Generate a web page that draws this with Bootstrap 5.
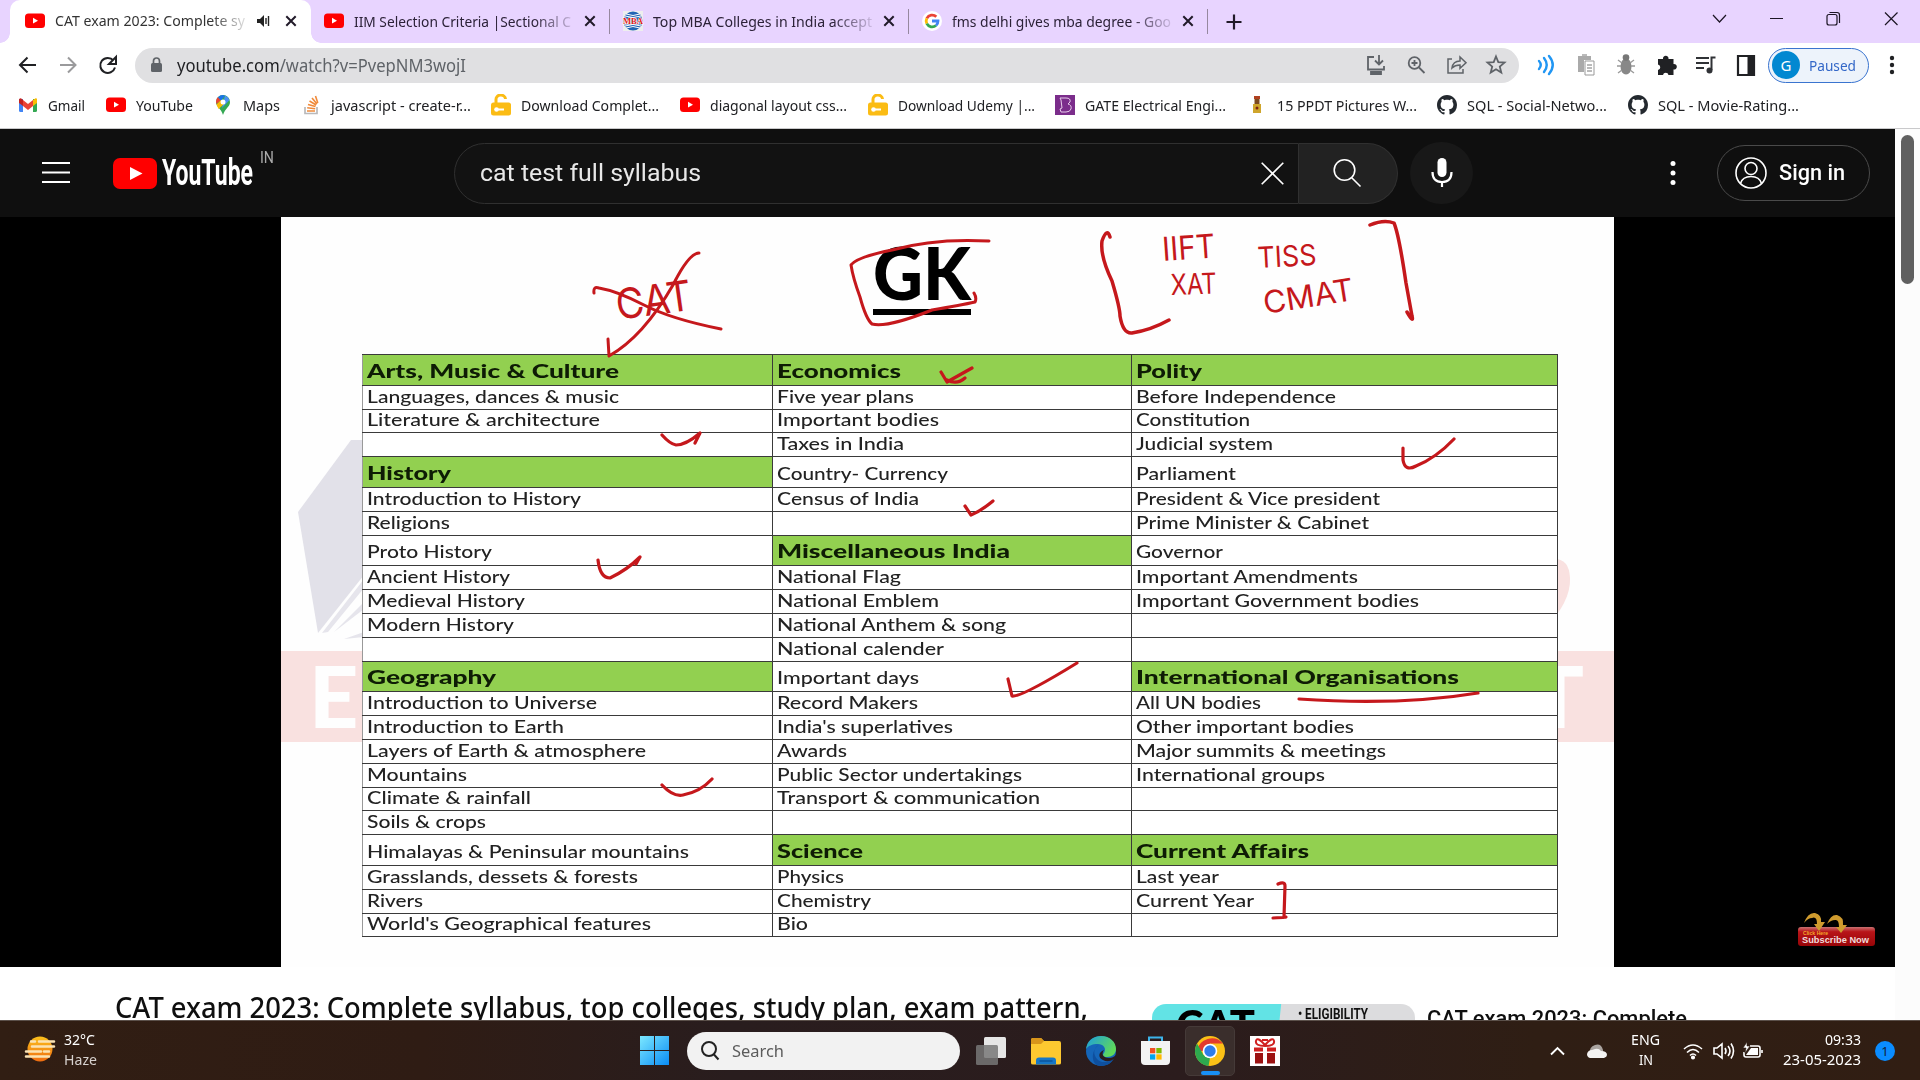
<!DOCTYPE html>
<html lang="en">
<head>
<meta charset="utf-8">
<title>CAT exam 2023: Complete syllabus</title>
<link href="https://cdn.jsdelivr.net/npm/bootstrap@5.3.0/dist/css/bootstrap.min.css" rel="stylesheet">
<style>
html,body{width:1920px;height:1080px;overflow:hidden}
body{font-family:"Noto Sans","Open Sans",sans-serif;color:#202124;background:#fff}
svg{display:block;flex:none;overflow:visible}
.fit{display:inline-block;white-space:nowrap;transform-origin:0 50%;flex:none}
.tabstrip{height:43px;background:#e8d4ff;font-size:15.3px;padding-left:10px}
.tab-item{width:299px;height:42px;padding-left:13px;padding-bottom:1px;color:#2c2238}
.tab-item.first{width:301px;height:43px;background:#fff;border-radius:10px 10px 0 0;padding-left:15px;padding-bottom:2px;color:#333;position:relative}
.tab-item.first::before,.tab-item.first::after{content:"";position:absolute;bottom:0;width:10px;height:10px}
.tab-item.first::before{left:-10px;background:radial-gradient(circle at 0 0,#e8d4ff 9.5px,#fff 10px)}
.tab-item.first::after{right:-10px;background:radial-gradient(circle at 100% 0,#e8d4ff 9.5px,#fff 10px)}
.tab-title{width:219px;margin-left:10px;overflow:hidden;-webkit-mask-image:linear-gradient(90deg,#000 82%,rgba(0,0,0,.15) 100%);mask-image:linear-gradient(90deg,#000 82%,rgba(0,0,0,.15) 100%)}
.tab-item.first .tab-title{width:190px;margin-right:8px}
.tab-item.first .tab-x{margin-left:14px}
.tab-x{margin-left:11px}
.tab-sep{width:1px;height:25px;background:#96889f}
.toolbar-row{height:43px;padding-left:15px;padding-top:1px}
.omnibox{width:1384px;height:35px;border-radius:18px;background:#e0e0e2;font-size:17.5px;color:#5f6368;padding:0 10px 0 15px}
.omnibox b{font-weight:400;color:#202124}
.profile-chip{width:101px;height:35px;border:1.5px solid #3a74cf;border-radius:18px;background:#edf3fb;color:#3367c8;font-size:15px;padding-left:3px}
.avatar-dot{width:28px;height:28px;border-radius:50%;background:#0288d1;color:#fff;font-size:15px}
.bookmarks{height:43px;padding-left:18px;padding-bottom:4px;font-size:15.3px;gap:20.6px;border-bottom:1px solid #c9c9cb}
.bookmarks>div{gap:10px}
.viewport-area{height:891px;overflow:hidden}
.page-col{width:1895px}
.masthead{height:88px;background:#0f0f0f;color:#fff;font-family:Roboto,sans-serif}
.searchfield{width:845px;height:61px;border:1px solid #303030;border-radius:31px 0 0 31px;background:#121212;font-size:24px;color:#e8e8e8;padding:0 14px 0 25px}
.searchbtn{width:99px;height:61px;border:1px solid #303030;border-left:0;border-radius:0 31px 31px 0;background:#222;padding-right:2px}
.micbtn{width:63px;height:62px;border-radius:50%;background:#181818}
.signin{width:153px;height:56px;border:1px solid #4a4a4a;border-radius:28px;padding-left:17px;font-size:22.5px;font-weight:500}
.wordmark{font-weight:700;font-size:37px;line-height:40px}
.video-box{height:750px;background:#000;padding-left:281px}
.slide-area{width:1333px;height:750px;background:#fefefe;position:relative;overflow:hidden;padding:16px 56px 0 81px;font-family:Lato,sans-serif}
.overlay-svg{position:absolute;left:0;top:0}
.gk-title{height:121px;color:#000;font-weight:900;font-size:73px;line-height:78px;padding-left:511px}
.gk-bar{width:98px;height:6px;background:#000;margin-top:-2px}
.syllabus{width:1196px;table-layout:fixed;border-collapse:collapse;position:relative;background:#fff;color:#222;font-size:17px;line-height:18px;font-weight:500}
.syllabus td{border:1.6px solid #3a3a3a;padding:0 0 3px 4px;height:23.8px;vertical-align:bottom;white-space:nowrap;overflow:hidden}
.syllabus td:first-child{border-left-color:#999}
.syllabus tr.tall td{height:30.8px;padding-bottom:4px}
.syllabus td.head{background:#92d050;color:#0e1c05;font-weight:900;font-size:19px;line-height:22px;padding-bottom:3px!important}
.sub-badge{position:absolute;left:1794px;top:910px;z-index:3}
.below{padding:32px 0 0 115px;height:53px;overflow:hidden}
.watch-title{font-size:28.5px;line-height:36px;font-weight:500;color:#0f0f0f;width:1037px;margin-top:-10px}
.thumb{width:263px;height:60px;border-radius:14px 14px 0 0;background:linear-gradient(96deg,#62e3e5 0 128px,#dcdcde 129px);margin-top:5px;overflow:hidden}
.thumb-cat{font:900 41px/41px Lato,sans-serif;color:#000;padding-left:24px;width:146px}
.thumb-el{font:700 14px/20px Roboto,sans-serif;color:#111}
.side-title{font:500 22.5px/30px Roboto,sans-serif;color:#0f0f0f;margin:4px 0 0 12px}
.scroll-track{width:25px;background:#fcfcfc;padding:6px 0 0 6px}
.scroll-thumb{width:13px;height:149px;border-radius:7px;background:#606060}
.taskbar{height:60px;border-top:1px solid #5b504a;background:linear-gradient(90deg,#311e13,#2f1c14 22%,#291d1e 38%,#2b1c1d 62%,#2f1e14 80%,#311e13);color:#fff;font-size:14.5px;line-height:20px}
.weather{width:640px;padding-left:25px;gap:9px}
.task-search{width:273px;height:38px;border-radius:19px;background:#f2f2f2;margin:0 16px 0 18px;color:#5c5c5c;font-size:17px;padding-left:14px;gap:13px}
.task-icons{gap:25px}
.chrome-slot{width:50px;height:50px;margin:0 -10px;border-radius:5px;background:#3a2e2c;border:1px solid #453a38;position:relative}
.chrome-slot i{position:absolute;left:15px;bottom:0;width:19px;height:4px;border-radius:2px;background:#1890f5}
.tray{margin-left:auto;padding-right:25px}
.two-line{padding-bottom:3px}
.note-badge{width:20px;height:20px;border-radius:50%;background:#0a8cff;color:#10213a;font-size:13px;margin-left:14px}
</style>
<script src="https://cdn.jsdelivr.net/npm/bootstrap@5.3.0/dist/js/bootstrap.bundle.min.js"></script>
</head>
<body>
<svg width="0" height="0" class="position-absolute">
<defs>
<symbol id="yt" viewBox="0 0 20 18"><rect y="1.5" width="20" height="14.5" rx="3.5" fill="#f00"/><path d="M8 5.8v5.8l5-2.9z" fill="#fff"/></symbol>
<symbol id="cross" viewBox="0 0 12 12"><path d="M1.3 1.3l9.4 9.4M10.7 1.3L1.3 10.7" stroke="#211a29" stroke-width="2"/></symbol>
<symbol id="lockopen" viewBox="0 0 20 22"><path d="M5 10V5.500a4.500 4 0 0 1 9.500-.5" fill="none" stroke="#fbbc14" stroke-width="3"/><rect y="8.500" width="20" height="13" rx="2.500" fill="#fbbc14"/><circle cx="5.500" cy="15.500" r="2.300" fill="#fff"/><path d="M6 15.500h7" stroke="#fff" stroke-width="2"/></symbol>
<symbol id="gh" viewBox="0 0 16 16"><path fill="#24292f" d="M8 0C3.580 0 0 3.580 0 8c0 3.540 2.290 6.530 5.470 7.590.4.070.55-.17.55-.38 0-.19-.01-.82-.01-1.490-2.010.37-2.530-.49-2.690-.94-.09-.23-.48-.94-.82-1.130-.28-.15-.68-.52-.01-.53.63-.01 1.080.58 1.230.82.72 1.210 1.870.87 2.330.66.07-.52.28-.87.51-1.070-1.780-.2-3.640-.89-3.640-3.950 0-.87.31-1.590.82-2.150-.08-.2-.36-1.020.08-2.120 0 0 .67-.21 2.200.82.64-.18 1.320-.27 2-.27s1.360.09 2 .27c1.530-1.040 2.200-.82 2.200-.82.44 1.100.16 1.920.08 2.120.51.56.82 1.270.82 2.150 0 3.070-1.870 3.750-3.650 3.950.29.25.54.73.54 1.480 0 1.070-.01 1.930-.01 2.200 0 .21.15.46.55.38A8.010 8.010 0 0 0 16 8c0-4.420-3.580-8-8-8z"/></symbol>
</defs>
</svg>

<!-- Tab strip -->
<div class="tabstrip d-flex align-items-center">
  <div class="tab-item first d-flex align-items-center">
    <svg width="20" height="18"><use href="#yt"/></svg>
    <div class="tab-title"><span class="fit" data-w="190">CAT exam 2023: Complete sy</span></div>
    <svg width="14" height="12" viewBox="0 0 14 12" class="ms-1"><path d="M0 4h3l4-4v12L3 8H0z" fill="#222"/><path d="M9 3v6M11.500 1v10" stroke="#222" stroke-width="1.400"/></svg>
    <svg width="12" height="12" class="tab-x"><use href="#cross"/></svg>
  </div>
  <div class="tab-item d-flex align-items-center">
    <svg width="20" height="18"><use href="#yt"/></svg>
    <div class="tab-title"><span class="fit" data-w="217">IIM Selection Criteria |Sectional C</span></div>
    <svg width="12" height="12" class="tab-x"><use href="#cross"/></svg>
    <div class="tab-sep ms-auto"></div>
  </div>
  <div class="tab-item d-flex align-items-center">
    <svg width="20" height="20" viewBox="0 0 20 20"><path fill="#eee" d="M0 0h20v20H0z"/><circle cx="10" cy="10" r="9.500" fill="#2265b5"/><path d="M2 5q8 3 16 0M3 3q7 3 14 0M2 15q8-3 16 0M3 17q7-3 14 0" stroke="#fff" fill="none"/><text x="0" y="13" font-size="8.500" font-family="Liberation Serif,serif" font-weight="700" fill="#e01818" stroke="#fff" stroke-width="1.200" paint-order="stroke" textLength="20" lengthAdjust="spacingAndGlyphs">MBA</text></svg>
    <div class="tab-title"><span class="fit" data-w="219">Top MBA Colleges in India accept</span></div>
    <svg width="12" height="12" class="tab-x"><use href="#cross"/></svg>
    <div class="tab-sep ms-auto"></div>
  </div>
  <div class="tab-item d-flex align-items-center">
    <svg width="20" height="20" viewBox="0 0 20 20"><circle cx="10" cy="10" r="10" fill="#fff"/><g fill="none" stroke-width="2.800"><path d="M4.800 7.300A6 6 0 0 1 14.300 5.800" stroke="#ea4335"/><path d="M4.800 12.700a6 6 0 0 1 0-5.400" stroke="#fbbc05"/><path d="M14 14.500a6 6 0 0 1-9.200-1.800" stroke="#34a853"/><path d="M10 10h6a6 6 0 0 1-2 4.500" stroke="#4285f4"/></g></svg>
    <div class="tab-title"><span class="fit" data-w="219">fms delhi gives mba degree - Goo</span></div>
    <svg width="12" height="12" class="tab-x"><use href="#cross"/></svg>
    <div class="tab-sep ms-auto"></div>
  </div>
  <svg width="16" height="16" viewBox="0 0 16 16" style="margin-left:18px"><path d="M8 0.500v15M.5 8h15" stroke="#211a29" stroke-width="2.200"/></svg>
  <svg class="ms-auto mb-2" width="190" height="20" viewBox="1711 8 190 20" style="margin-right:19px" fill="none" stroke="#1c1524" stroke-width="1.200"><path d="M1713 15l6.500 7 6.500-7M1770 18.500h13M1885 12.500l12.500 12.500M1897.500 12.500L1885 25"/><rect x="1827" y="14.500" width="10" height="10.500" rx="2"/><path d="M1829.500 12.500h7.500q2.500 0 2.500 2.500v8"/></svg>
</div>

<!-- Toolbar -->
<div class="toolbar-row d-flex align-items-center">
  <svg width="120" height="24" viewBox="15 0 120 24" fill="none" stroke="#202124" stroke-width="2"><path d="M36 12H20M27.500 4.500L20 12l7.500 7.500"/><path d="M60 12h16M68 4.500l7.500 7.500-7.500 7.500" stroke="#9a9a9c"/><path d="M113.500 7.500a7.500 7.500 0 1 0 1.500 7M116 4v7h-7z"/></svg>
  <div class="omnibox d-flex align-items-center">
    <svg width="14" height="16" viewBox="0 0 14 16"><rect x="1" y="6" width="11" height="9" rx="1.500" fill="#5f6368"/><path d="M3.500 7V4a3 3 0 0 1 6 0v3" stroke="#5f6368" stroke-width="1.700" fill="none"/></svg>
    <span class="fit" style="margin-left:13px" data-w="289"><b>youtube.com</b>/watch?v=PvepNM3wojI</span>
    <svg class="ms-auto" width="146" height="24" viewBox="1363 0 146 24" fill="none" stroke="#5f6368" stroke-width="1.800"><path d="M1374 4h-6v12.500h16V13M1379 2v9M1375 7.500l4 4 4-4M1371 19h10v2h-10z"/><circle cx="1414.500" cy="10" r="5.800"/><path d="M1419 14.500l5.500 5.500M1411.500 10h6M1414.500 7v6"/><path d="M1452 6h-4v14h15v-4M1452 15q1-7 8-7V4l6 5.800-6 5.500V12q-5 0-8 3z" stroke-width="1.500"/><path d="M1496 3.500l2.300 5.700 6.200.4-4.700 4 1.500 6-5.300-3.300-5.300 3.300 1.500-6-4.700-4 6.200-.4z"/></svg>
  </div>
  <svg width="249" height="26" viewBox="1519 0 249 26"><g fill="none" stroke="#2196f3" stroke-width="2.400" stroke-linecap="round"><path d="M1539 9q3.500 4 0 8M1544 6q5.500 7 0 14M1549 4q7.500 9 0 18"/></g><g fill="#aaa"><path d="M1578 4h13v4h-7v12h-6z"/><path d="M1585 9h9l0 14h-9z" fill="#fff" stroke="#999"/><path d="M1587 13h5M1587 16h5M1587 19h5M1582 3h5" stroke="#777"/></g><g><ellipse cx="1626" cy="14.500" rx="5.500" ry="8" fill="#888"/><circle cx="1626" cy="5.500" r="3.300" fill="#777"/><path d="M1618 8l4 3M1617 14h4M1618 21l4-3M1634 8l-4 3M1635 14h-4M1634 21l-4-3" stroke="#999" stroke-width="1.300"/></g><path d="M1658 7h5a2.800 2.800 0 1 1 5.500 0h5v5a2.800 2.800 0 1 1 0 5.500V23h-5a2.800 2.800 0 0 0-5.500 0h-5v-5a2.800 2.800 0 0 0 0-5.500z" fill="#202124"/><path d="M1696 6h13M1696 11h13M1696 16h8" stroke="#303236" stroke-width="2"/><path d="M1711.500 18V5.500h4" stroke="#303236" stroke-width="2" fill="none"/><circle cx="1709.500" cy="18.500" r="3" fill="#303236"/><path d="M1738 4h16v19h-16z" fill="#fff" stroke="#202124" stroke-width="2.200"/><path d="M1747.500 4h7v19h-7z" fill="#202124"/></svg>
  <div class="profile-chip d-flex align-items-center"><div class="avatar-dot d-flex align-items-center justify-content-center">G</div><span class="fit" style="margin-left:9px" data-w="47">Paused</span></div>
  <svg width="6" height="22" viewBox="0 0 6 22" style="margin-left:20px" fill="#202124"><circle cx="3" cy="4" r="2.200"/><circle cx="3" cy="11" r="2.200"/><circle cx="3" cy="18" r="2.200"/></svg>
</div>

<!-- Bookmarks -->
<div class="bookmarks d-flex align-items-center">
  <div class="d-flex align-items-center"><svg width="20" height="16" viewBox="0 0 20 16"><path d="M1 2h4v13H2.500Q1 15 1 13.500z" fill="#4285f4"/><path d="M15 2h4v11.500q0 1.500-1.500 1.500H15z" fill="#34a853"/><path d="M15 3l3-2 1 1v4l-4 3z" fill="#fbbc04"/><path d="M5 3l5 4 5-4v6l-5 4-5-4z" fill="#ea4335"/><path d="M1 2.500Q2.500 0 5 3v6L1 6z" fill="#c5221f"/></svg><span class="fit" data-w="37">Gmail</span></div>
  <div class="d-flex align-items-center"><svg width="20" height="18"><use href="#yt"/></svg><span class="fit" data-w="57">YouTube</span></div>
  <div class="d-flex align-items-center"><svg width="20" height="22" viewBox="0 0 20 20"><path d="M10 0a7 7 0 0 1 7 7c0 5-5 6-7 13C8 13 3 12 3 7a7 7 0 0 1 7-7z" fill="#34a853"/><path d="M3.500 9A7 7 0 0 1 5 2l3.500 3z" fill="#ea4335"/><path d="M5 2.200A7 7 0 0 1 12 .4L8 6z" fill="#1a73e8"/><path d="M12 .4A7 7 0 0 1 16.500 5L9 13z" fill="#4a90f5"/><path d="M3.500 9.500L8 5l3 4-5.500 5z" fill="#fbbc04"/><circle cx="10" cy="7" r="2.500" fill="#fff"/></svg><span class="fit" data-w="37">Maps</span></div>
  <div class="d-flex align-items-center"><svg width="20" height="20" viewBox="0 0 20 20" fill="none"><path d="M4 12v6.500h12V12" stroke="#b9b9bb" stroke-width="1.700"/><path d="M6 16h8M6.200 12.800l8 .9M7 9.500l7.500 2M8.500 6l6.700 4M11 3l5 6M14.500 1l2.300 7" stroke="#f08a3a" stroke-width="1.600"/></svg><span class="fit" data-w="140">javascript - create-r...</span></div>
  <div class="d-flex align-items-center"><svg width="20" height="22"><use href="#lockopen"/></svg><span class="fit" data-w="138">Download Complet...</span></div>
  <div class="d-flex align-items-center"><svg width="20" height="18"><use href="#yt"/></svg><span class="fit" data-w="137">diagonal layout css...</span></div>
  <div class="d-flex align-items-center"><svg width="20" height="22"><use href="#lockopen"/></svg><span class="fit" data-w="137">Download Udemy |...</span></div>
  <div class="d-flex align-items-center"><svg width="20" height="20" viewBox="0 0 20 20"><path d="M0 0h20v20H0z" fill="#7b2d8b"/><path d="M5 3h6q5 0 4 4l-2 2q4 1 3 5-1 3-5 3H6l-1-3 2-1-1-8z" fill="none" stroke="#e7cdea"/></svg><span class="fit" data-w="141">GATE Electrical Engi...</span></div>
  <div class="d-flex align-items-center"><svg width="20" height="18" viewBox="0 0 20 18"><path d="M7 0h6v3H7z" fill="#b0401f"/><path d="M7.500 3h5v5h-5z" fill="#7c4a20"/><path d="M6 8h8v9H6z" fill="#cfa52c"/><circle cx="10" cy="12" r="1.500" fill="#7c2412"/></svg><span class="fit" data-w="140">15 PPDT Pictures W...</span></div>
  <div class="d-flex align-items-center"><svg width="20" height="20"><use href="#gh"/></svg><span class="fit" data-w="140">SQL - Social-Netwo...</span></div>
  <div class="d-flex align-items-center"><svg width="20" height="20"><use href="#gh"/></svg><span class="fit" data-w="141">SQL - Movie-Rating...</span></div>
</div>

<!-- Web page -->
<div class="viewport-area d-flex">
  <div class="page-col">
    <header class="masthead d-flex align-items-center">
      <svg width="28" height="22" viewBox="0 0 28 22" style="margin-left:42px"><path d="M0 1h28M0 10.500h28M0 20h28" stroke="#fff" stroke-width="2"/></svg>
      <svg width="44" height="31" viewBox="0 0 44 31" style="margin-left:43px"><rect width="44" height="31" rx="7" fill="#f00"/><path d="M17 9v13l12.500-6.500z" fill="#fff"/></svg>
      <span class="fit wordmark" style="margin-left:5px" data-w="91">YouTube</span>
      <span class="fit align-self-start" style="margin:17px 0 0 7px;font-size:16px;color:#aaa" data-w="14">IN</span>
      <div class="searchfield d-flex align-items-center justify-content-between" style="margin-left:180px"><span class="fit" data-w="221">cat test full syllabus</span><svg width="23" height="23" viewBox="0 0 23 23"><path d="M.7.7l21.600 21.600M22.300.7L.7 22.300" stroke="#fff" stroke-width="1.600"/></svg></div>
      <div class="searchbtn d-flex align-items-center justify-content-center"><svg width="28" height="28" viewBox="0 0 28 28" fill="none" stroke="#fff" stroke-width="1.600"><circle cx="11.500" cy="11" r="10.300"/><path d="M18.500 18.500l9 9"/></svg></div>
      <div class="micbtn d-flex align-items-center justify-content-center" style="margin-left:12px"><svg width="22" height="30" viewBox="0 0 22 30"><rect x="6.500" y="0" width="9" height="19" rx="4.500" fill="#fff"/><path d="M1.500 14q0 10 9.500 10t9.500-10M11 24v5" fill="none" stroke="#fff" stroke-width="2.200"/></svg></div>
      <svg width="6" height="24" viewBox="0 0 6 24" fill="#fff" style="margin-left:197px"><circle cx="3" cy="2.500" r="2.500"/><circle cx="3" cy="12" r="2.500"/><circle cx="3" cy="21.500" r="2.500"/></svg>
      <div class="signin d-flex align-items-center" style="margin-left:41px"><svg width="32" height="32" viewBox="0 0 32 32" fill="none" stroke="#fff" stroke-width="1.600"><circle cx="16" cy="16" r="15"/><circle cx="16" cy="11.500" r="6"/><path d="M5.500 26.500q2-7 10.500-7t10.500 7"/></svg><span class="fit" style="margin-left:12px" data-w="66">Sign in</span></div>
    </header>

    <div class="video-box">
      <div class="slide-area">
        <!-- watermark -->
        <svg class="overlay-svg" width="1333" height="750" viewBox="281 217 1333 750">
          <path d="M351 440L298 512 318 633 364 575V440z" fill="#e2e1e9"/>
          <path d="M322 633l42-54v9l-36 44zM334 632l30-30v7zM344 639l20-7v5z" fill="#e6e5ec"/>
          <path d="M1545 560q24-6 25 18t-25 50z" fill="#f9e1e0"/>
          <path d="M281 651h1333v91H281z" fill="#f9e1e0"/>
          <text x="309" y="728" font-family="Lato,sans-serif" font-weight="900" font-size="86" fill="#fefefe">E</text>
          <text x="1532" y="728" font-family="Lato,sans-serif" font-weight="900" font-size="86" fill="#fefefe">T</text>
        </svg>
        <div class="gk-title"><span class="fit" data-w="98">GK</span><div class="gk-bar"></div></div>
        <table class="syllabus" id="syllabus"><colgroup><col style="width:410px"><col style="width:359px"><col></colgroup><tbody></tbody></table>
        <!-- pen marks -->
        <svg class="overlay-svg" width="1333" height="750" viewBox="281 217 1333 750" fill="none" stroke="#c5181c" stroke-width="3" stroke-linecap="round" stroke-linejoin="round">
          <path d="M594 293q-1-7 5-5 18 3 45 17t77 24M699 253q-10 0-26 32-30 52-64 71l-1-17"/>
          <path d="M989 241q-55-3-97 9-35 7-41 15 2 13 9 32 6 22 12 27 15 4 60-14 30-5 43-8 2-4-1-9"/>
          <path d="M1110 237q-3-10-8 4-2 15 10 40 8 27 8 35 3 18 12 17 19-3 37-13M1370 225q14-6 24-2 5 12 12 60l6 33q2 8-5-4" stroke-width="3.500"/>
          <path d="M941 372l6 10 25-14M947 380q10 5 18-2M662 435q8 9 14 10 10 0 24-12l-5 10M1403 448v12q2 12 13 6 20-8 38-27M598 560q2 18 12 18 17-8 30-21l-4 7M965 506l6 9q10-4 22-14M1008 679l4 17q8 2 65-33M662 785q11 12 21 10 17-3 29-16M1299 699q100 7 179-6M1278 884q7-3 7 2l-1 31q7 0-11 1" stroke-width="3.200"/>
          <g stroke="none" fill="#c5181c" font-family="Inter,sans-serif" font-weight="400">
            <text transform="translate(618 320) rotate(-8) scale(1 1.450)" font-size="29" textLength="76" lengthAdjust="spacingAndGlyphs">CAT</text>
            <text transform="translate(1163 261) rotate(-4)" font-size="33" textLength="53" lengthAdjust="spacingAndGlyphs">IIFT</text>
            <text transform="translate(1171 295) rotate(-2)" font-size="29" textLength="46" lengthAdjust="spacingAndGlyphs">XAT</text>
            <text transform="translate(1258 268) rotate(-3)" font-size="29" textLength="59" lengthAdjust="spacingAndGlyphs">TISS</text>
            <text transform="translate(1265 314) rotate(-9)" font-size="31" textLength="91" lengthAdjust="spacingAndGlyphs">CMAT</text>
          </g>
        </svg>
      </div>
      <svg class="sub-badge" width="84" height="40" viewBox="1794 910 84 40">
        <defs><linearGradient id="redbtn" x2="0" y2="1"><stop stop-color="#c97272"/><stop offset=".25" stop-color="#b81418"/><stop offset="1" stop-color="#980508"/></linearGradient></defs>
        <rect x="1798" y="927" width="77" height="19" rx="3" fill="url(#redbtn)"/>
        <path d="M1804 923q4-11 11-10 7 2 6 9l4 0-6 9-5-7h3q0-8-5-6-4 0-8 5zM1827 924q4-10 10-9 7 2 6 10l4 0-6 8-5-6h3q0-8-4-7-4 0-8 4z" fill="#cf9b2e"/>
        <text x="1803" y="935" font-size="4.500" font-family="Liberation Sans,sans-serif" font-weight="700" fill="#f3a92c" textLength="25" lengthAdjust="spacingAndGlyphs">Click Here</text>
        <text x="1802" y="943" font-size="9.500" font-family="Liberation Sans,sans-serif" font-weight="700" fill="#f1dcdc" textLength="67" lengthAdjust="spacingAndGlyphs">Subscribe Now</text>
      </svg>
    </div>

    <div class="below d-flex align-items-start">
      <div class="watch-title"><span class="fit" data-w="973">CAT exam 2023: Complete syllabus, top colleges, study plan, exam pattern,</span></div>
      <div class="thumb d-flex"><div class="thumb-cat"><span class="fit" data-w="79">CAT</span></div><span class="fit thumb-el" data-w="70">• ELIGIBILITY</span></div>
      <div class="side-title"><span class="fit" data-w="260">CAT exam 2023: Complete</span></div>
    </div>
  </div>
  <div class="scroll-track"><div class="scroll-thumb"></div></div>
</div>

<!-- Taskbar -->
<div class="taskbar d-flex align-items-center">
  <div class="weather d-flex align-items-center">
    <svg class="mb-1" width="30" height="26" viewBox="0 0 30 26"><defs><linearGradient id="sun" x2="0" y2="1"><stop stop-color="#fbc01c"/><stop offset="1" stop-color="#ef6c10"/></linearGradient></defs><circle cx="15" cy="13" r="12.500" fill="url(#sun)"/><path d="M6 5.500h4M14 5.500h15M7 10.500h22M1 15.500h15M19 15.500h5M1 20.500h23" stroke="#fbe3b4" stroke-width="2.500" stroke-linecap="round"/></svg>
    <div class="two-line"><div><span class="fit" data-w="31">32°C</span></div><div><span class="fit" style="color:#d6d1ce" data-w="33">Haze</span></div></div>
  </div>
  <svg width="29" height="29" viewBox="0 0 29 29"><defs><linearGradient id="win" x2="1" y2="1"><stop stop-color="#7ce8ff"/><stop offset="1" stop-color="#0a8cf5"/></linearGradient></defs><path d="M0 0h14v14H0zM15 0h14v14H15zM0 15h14v14H0zM15 15h14v14H15z" fill="url(#win)"/></svg>
  <div class="task-search d-flex align-items-center"><svg width="18" height="19" viewBox="0 0 18 19" fill="none" stroke="#222" stroke-width="2"><circle cx="8" cy="8" r="7"/><path d="M12.500 13l5 5.500"/></svg><span class="fit" data-w="52">Search</span></div>
  <div class="task-icons d-flex align-items-center">
    <svg width="30" height="28" viewBox="0 0 30 28"><rect x="8" width="22" height="21" rx="1.500" fill="#e6e6e6"/><rect y="8" width="22" height="20" rx="1.500" fill="#777" fill-opacity=".85"/></svg>
    <svg width="30" height="28" viewBox="0 0 30 28"><path d="M0 3q0-2 2-2h8l3 3h15q2 0 2 2v20q0 1.500-2 1.500H2Q0 27.500 0 26z" fill="#fdc830"/><path d="M0 3q0-2 2-2h8l3 3-3 3H0z" fill="#d8951b"/><path d="M5 27.500v-4q0-3 3-3h14q3 0 3 3v4z" fill="#1677c7"/><path d="M8.500 24h13" stroke="#0b559c" stroke-width="1.500"/></svg>
    <svg width="30" height="30" viewBox="0 0 30 30"><defs><linearGradient id="ed" x2="1" y2=".5"><stop stop-color="#1b9de2"/><stop offset="1" stop-color="#5fd95a"/></linearGradient></defs><circle cx="15" cy="15" r="15" fill="#1565b8"/><path d="M0 13C1 5 7 0 15 0c9 0 15 6 15 13 0 5-4 8-9 8-4 0-5-2-3-4 3-5-1-9-6-9-6 0-10 2-12 5z" fill="url(#ed)"/><path d="M13 9c-9 4-4 18 6 17 3 0 6-1 8-3-2 5-7 7-12 7C4 30 5 13 13 9z" fill="#0e4f9e"/><path d="M18 14c-3 4-1 8 5 8 3 0 5-1 7-3q0 2-2 4-6 4-11 1c-5-2-5-8 1-10z" fill="#2b1c1d"/></svg>
    <svg width="29" height="30" viewBox="0 0 29 30"><path d="M8 6V1.500h13V6" fill="none" stroke="#3cb3ea" stroke-width="2"/><path d="M0 5h29v20q0 4-4 4H4q-4 0-4-4z" fill="#f3f3f3"/><path d="M9 12h5.300v5.300H9z" fill="#f25022"/><path d="M15.300 12h5.300v5.300h-5.300z" fill="#7fba00"/><path d="M9 18.300h5.300v5.300H9z" fill="#00a4ef"/><path d="M15.300 18.300h5.300v5.300h-5.300z" fill="#ffb900"/></svg>
    <div class="chrome-slot d-flex align-items-center justify-content-center"><svg width="30" height="30" viewBox="0 0 30 30"><circle cx="15" cy="15" r="15" fill="#fbc116"/><path d="M15 15H2A15 15 0 0 1 28 7.500H15z" fill="#e33b2e"/><path d="M2 7.500L8.500 19 15 22 13.500 30A15 15 0 0 1 2 7.500z" fill="#2da94f"/><circle cx="15" cy="15" r="7.300" fill="#fff"/><circle cx="15" cy="15" r="5.700" fill="#2f7de9"/></svg><i></i></div>
    <svg width="30" height="30" viewBox="0 0 30 30"><path fill="#fff" d="M0 0h30v30H0z"/><path d="M5 17h8v10.500H5zM17 17h8v10.500h-8z" fill="#9c1212"/><path d="M4 11.500h9v4H4zM17 11.500h9v4h-9z" fill="#d02020"/><path d="M15 10Q5 10 6 5t9 4q8-9 9-4t-9 5zM12 4h6" fill="none" stroke="#d02020" stroke-width="2"/></svg>
  </div>
  <div class="tray d-flex align-items-center">
    <svg width="15" height="8" viewBox="0 0 15 8"><path d="M1 7.500L7.500 1 14 7.500" fill="none" stroke="#fff" stroke-width="1.900"/></svg>
    <svg width="20" height="14" viewBox="0 0 20 14" style="margin-left:22px"><path d="M3 9Q2 3 8 1q6-2 8 5v5z" fill="#aaa4a0"/><path d="M0 10q1-4 5-4l3-1q4-1 6 2 6 0 6 4 0 2-3 3H3q-3-1-3-4z" fill="#f4f3f2"/></svg>
    <div class="text-center two-line" style="margin-left:24px"><div><span class="fit" data-w="29">ENG</span></div><div><span class="fit" data-w="14">IN</span></div></div>
    <svg width="80" height="18" viewBox="0 0 80 18" style="margin:0 20px 0 23px" fill="none" stroke="#fff" stroke-width="1.600"><path d="M1 7q9-8 18 0M4 10.500q6-6 12 0M7 13.500q3-3 6 0"/><circle cx="10" cy="15.500" r="1.300" fill="#fff"/><path d="M31 6h3l5-4v14l-5-4h-3zM42 6q2 3 0 6M45 4q4 5 0 10M48 1.500q5 7.500 0 15M67 4h8q2 0 2 2v7q0 2-2 2H63q-2 0-2-2v-3M79 8v3"/><path d="M68 6h7v7H63z" fill="#fff" stroke="none"/><path d="M64 0l-4 6h3l-1 5 5-7h-3z" fill="#fff" stroke="#2f1e14" stroke-width=".6"/></svg>
    <div class="text-end two-line"><div><span class="fit" data-w="36">09:33</span></div><div><span class="fit" data-w="78">23-05-2023</span></div></div>
    <div class="note-badge d-flex align-items-center justify-content-center">1</div>
  </div>
</div>

<script>
// Each row: three cells of [text, width, isHeading]
const rows = [
 [["Arts, Music & Culture",252,1],["Economics",124,1],["Polity",66,1]],
 [["Languages, dances & music",252],["Five year plans",137],["Before Independence",200]],
 [["Literature & architecture",233],["Important bodies",162],["Constitution",114]],
 [0,["Taxes in India",127],["Judicial system",137]],
 [["History",84,1],["Country- Currency",171],["Parliament",100]],
 [["Introduction to History",214],["Census of India",142],["President & Vice president",244]],
 [["Religions",83],0,["Prime Minister & Cabinet",233]],
 [["Proto History",125],["Miscellaneous India",233,1],["Governor",87]],
 [["Ancient History",143],["National Flag",124],["Important Amendments",222]],
 [["Medieval History",158],["National Emblem",162],["Important Government bodies",283]],
 [["Modern History",147],["National Anthem & song",229],0],
 [0,["National calender",167],0],
 [["Geography",129,1],["Important days",142],["International Organisations",323,1]],
 [["Introduction to Universe",230],["Record Makers",141],["All UN bodies",125]],
 [["Introduction to Earth",197],["India's superlatives",176],["Other important bodies",218]],
 [["Layers of Earth & atmosphere",279],["Awards",70],["Major summits & meetings",250]],
 [["Mountains",100],["Public Sector undertakings",245],["International groups",189]],
 [["Climate & rainfall",164],["Transport & communication",263],0],
 [["Soils & crops",119],0,0],
 [["Himalayas & Peninsular mountains",322],["Science",86,1],["Current Affairs",173,1]],
 [["Grasslands, dessets & forests",271],["Physics",67],["Last year",83]],
 [["Rivers",56],["Chemistry",94],["Current Year",118]],
 [["World's Geographical features",284],["Bio",31],0]
];
const body = document.querySelector('#syllabus tbody');
rows.forEach(r => {
  const tr = body.insertRow();
  if (r.some(c => c && c[2])) tr.className = 'tall';
  r.forEach(c => {
    const td = tr.insertCell();
    if (!c) return;
    if (c[2]) td.className = 'head';
    const s = document.createElement('span');
    s.className = 'fit'; s.dataset.w = c[1]; s.textContent = c[0];
    td.append(s);
  });
});
// Stretch or squeeze each label to its set width
document.querySelectorAll('.fit').forEach(e => {
  const w = +e.dataset.w, n = e.getBoundingClientRect().width;
  e.style.transform = `scaleX(${w / n})`;
  e.style.marginRight = (w - n) + 'px';
});
</script>
</body>
</html>
